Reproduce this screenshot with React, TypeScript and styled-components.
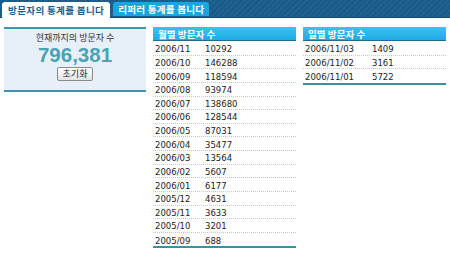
import React from 'react';
import styled, { createGlobalStyle } from 'styled-components';

const GlobalStyle = createGlobalStyle`
  html, body {
    margin: 0;
    padding: 0;
    background: #ffffff;
  }
  body {
    font-family: "DejaVu Sans", "Noto Sans CJK KR", sans-serif;
  }
`;

const KR = `"Noto Sans CJK KR", "DejaVu Sans", sans-serif`;

const Page = styled.div`
  width: 450px;
  height: 255px;
  overflow: hidden;
  display: flex;
  flex-direction: column;
`;

const TopBar = styled.div`
  height: 17px;
  display: flex;
  align-items: flex-end;
  gap: 3px;
  padding-left: 2px;
  background: repeating-linear-gradient(135deg, #1f6190 0 2px, #1b5a86 2px 4px);
  border-bottom: 1px solid #17486b;
`;

const Tab = styled.div<{ $active?: boolean }>`
  height: ${p => (p.$active ? '16px' : '14px')};
  margin-bottom: ${p => (p.$active ? '-1px' : '1px')};
  padding: 0 ${p => (p.$active ? '6px' : '5px')};
  display: flex;
  align-items: center;
  border-radius: 3px 3px 0 0;
  background: ${p => (p.$active ? '#ffffff' : '#1ba5dc')};
  color: ${p => (p.$active ? '#1e5f8c' : '#ffffff')};
  font-family: ${KR};
  font-size: 9.6px;
  font-weight: 700;
  letter-spacing: ${p => (p.$active ? '0.3px' : '0.2px')};
  white-space: nowrap;
`;

const Content = styled.div`
  display: flex;
  align-items: flex-start;
  gap: 7px;
  padding: 9px 4px 0 4px;
`;

const CounterBox = styled.div`
  width: 142px;
  height: 59px;
  background: #e7eff8;
  border-top: 2px solid #3d95aa;
  border-bottom: 2px solid #3d95aa;
  display: flex;
  flex-direction: column;
  align-items: center;
  padding-top: 2px;
  box-sizing: content-box;
`;

const CounterLabel = styled.div`
  font-family: ${KR};
  font-size: 9px;
  line-height: 13px;
  color: #333333;
`;

const CounterValue = styled.div`
  font-family: "Liberation Sans", Arial, sans-serif;
  font-size: 20.5px;
  font-weight: 700;
  line-height: 20px;
  margin-top: 1px;
  color: #4aa3b4;
`;

const ResetButton = styled.button`
  margin-top: 2px;
  height: 14px;
  padding: 0 5px;
  font-family: ${KR};
  font-size: 9px;
  line-height: 10px;
  color: #222222;
  background: linear-gradient(#ffffff, #e4e4e4);
  border: 1px solid #8a8a8a;
  border-radius: 2px;
  cursor: pointer;
`;

const ListPanel = styled.div`
  width: 143px;
  display: flex;
  flex-direction: column;
  border-bottom: 2px solid #3d8fa3;
`;

const ListHeader = styled.div`
  height: 13px;
  display: flex;
  align-items: center;
  padding-left: 5px;
  background: linear-gradient(#3cc0f4, #20abe6);
  border-bottom: 1px solid #1f6a8e;
  font-family: ${KR};
  font-size: 9.6px;
  font-weight: 700;
  color: #ffffff;
  margin-bottom: 1px;
`;

const Row = styled.div`
  box-sizing: border-box;
  height: 13.64px;
  display: flex;
  align-items: center;
  padding: 2px 0 0 2px;
  font-size: 8.5px;
  color: #222222;
  border-bottom: 1px dotted #c8c8c8;

  &:last-child {
    border-bottom: none;
  }
`;

const DateCell = styled.span<{ $width: number }>`
  width: ${p => p.$width}px;
`;

const ValueCell = styled.span``;

const monthly: [string, number][] = [
  ['2006/11', 10292],
  ['2006/10', 146288],
  ['2006/09', 118594],
  ['2006/08', 93974],
  ['2006/07', 138680],
  ['2006/06', 128544],
  ['2006/05', 87031],
  ['2006/04', 35477],
  ['2006/03', 13564],
  ['2006/02', 5607],
  ['2006/01', 6177],
  ['2005/12', 4631],
  ['2005/11', 3633],
  ['2005/10', 3201],
  ['2005/09', 688],
];

const daily: [string, number][] = [
  ['2006/11/03', 1409],
  ['2006/11/02', 3161],
  ['2006/11/01', 5722],
];

function StatList(props: { title: string; rows: [string, number][]; dateWidth: number }) {
  return (
    <ListPanel>
      <ListHeader>{props.title}</ListHeader>
      {props.rows.map(([date, value]) => (
        <Row key={date}>
          <DateCell $width={props.dateWidth}>{date}</DateCell>
          <ValueCell>{value}</ValueCell>
        </Row>
      ))}
    </ListPanel>
  );
}

export default function App() {
  return (
    <Page>
      <GlobalStyle />
      <TopBar>
        <Tab $active>방문자의 통계를 봅니다</Tab>
        <Tab>리퍼러 통계를 봅니다</Tab>
      </TopBar>
      <Content>
        <CounterBox>
          <CounterLabel>현재까지의 방문자 수</CounterLabel>
          <CounterValue>796,381</CounterValue>
          <ResetButton>초기화</ResetButton>
        </CounterBox>
        <StatList title="월별 방문자 수" rows={monthly} dateWidth={50} />
        <StatList title="일별 방문자 수" rows={daily} dateWidth={67} />
      </Content>
    </Page>
  );
}
